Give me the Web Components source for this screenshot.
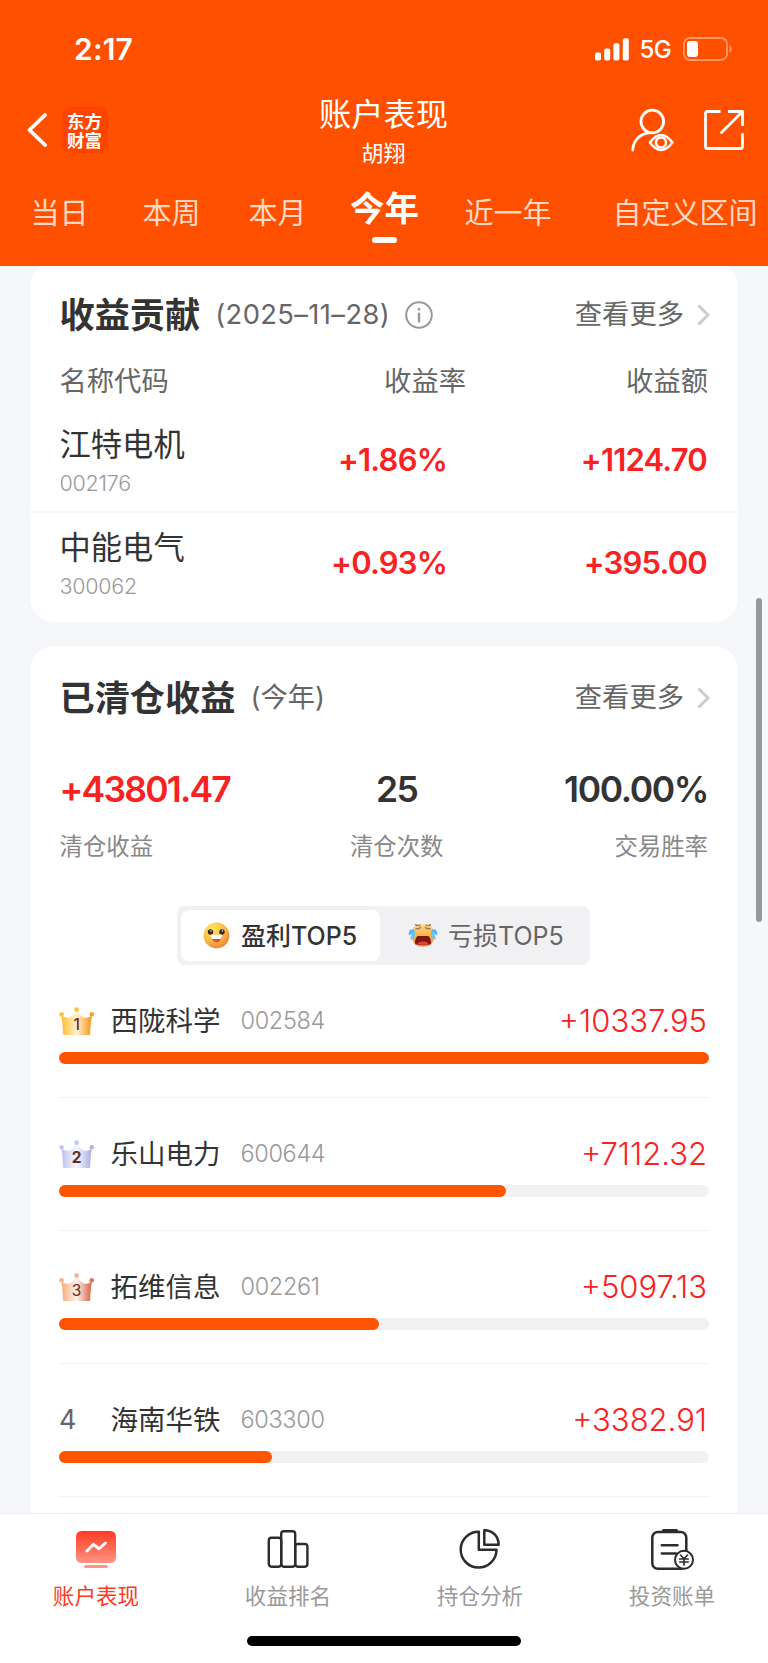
<!DOCTYPE html>
<html lang="zh-CN">
<head>
<meta charset="UTF-8">
<meta name="viewport" content="width=device-width, initial-scale=1">
<title>账户表现</title>
<style>
    html, body {
        margin: 0;
        padding: 0;
    }

    body {
        width: 768px;
        height: 1663px;
        overflow: hidden;
        background: #f6f7fa;
        color: #333;
        font-family: Inter, "Noto Sans CJK SC", sans-serif;
    }
</style>
</head>
<body>
<account-page></account-page>

<script>
class StatusBar extends HTMLElement {
    constructor() {
        super();
        this.attachShadow({mode: "open"}).innerHTML = `${statusHtml}`;
    }
}

const statusHtml = `
    <style>
        :host {
            display: flex;
            justify-content: space-between;
            align-items: center;
            height: 98px;
            padding: 0 35px 0 74px;
            box-sizing: border-box;
        }

        .time {
            font-size: 30px;
            line-height: 36px;
            font-weight: 600;
            letter-spacing: .2px;
        }

        .right {
            display: flex;
            align-items: center;
        }

        .net {
            font-size: 24px;
            line-height: 30px;
            font-weight: 500;
            margin: 2px 12px 0 10px;
            letter-spacing: -0.6px;
        }
    </style>
    <span class="time">2:17</span>
    <div class="right">
        <svg width="34" height="23" viewBox="0 0 34 23" fill="#fff">
            <rect x="0" y="14.5" width="6" height="8" rx="1.8"/>
            <rect x="9.2" y="10.5" width="6" height="12" rx="1.8"/>
            <rect x="18.4" y="5.3" width="6" height="17.2" rx="1.8"/>
            <rect x="27.8" y="0.3" width="6" height="22.2" rx="1.8"/>
        </svg>
        <span class="net">5G</span>
        <svg width="50" height="24" viewBox="0 0 50 24">
            <rect x="1" y="1" width="43" height="22" rx="6" fill="none" stroke="#fff" stroke-opacity=".4" stroke-width="1.8"/>
            <rect x="4" y="4" width="11" height="16" rx="3" fill="#fff"/>
            <path d="M46.5 8 C49.6 9.4 49.6 14.6 46.5 16 Z" fill="#fff" fill-opacity=".4"/>
        </svg>
    </div>
`;

class TitleBar extends HTMLElement {
    constructor() {
        super();
        this.attachShadow({mode: "open"}).innerHTML = `${titleHtml}`;
    }
}

const titleHtml = `
    <style>
        :host {
            display: grid;
            grid-template-columns: 1fr auto 1fr;
            height: 68px;
            padding: 0 24px 0 27px;
        }

        .left, .right {
            display: flex;
            align-items: center;
            height: 64px;
        }

        .right {
            justify-content: flex-end;
            gap: 30px;
        }

        .logo {
            box-sizing: border-box;
            width: 46px;
            height: 46px;
            margin-left: 15px;
            padding: 4px 5px 0;
            border-radius: 9px;
            background: #ff4300;
            font-family: "Noto Sans CJK SC", sans-serif;
            font-size: 17.5px;
            line-height: 19px;
            font-weight: 700;
        }

        .middle {
            text-align: center;
            margin-right: 4px;
        }

        .title {
            font-size: 32.3px;
            line-height: 34px;
        }

        .user {
            font-size: 22px;
            line-height: 26px;
            margin-top: 8px;
        }
    </style>
    <div class="left">
        <svg width="20" height="34" viewBox="0 0 20 34" fill="none" stroke="#fff" stroke-width="3.8" stroke-linecap="round" stroke-linejoin="round">
            <path d="M18 2 L2.5 17 L18 32"/>
        </svg>
        <div class="logo">东方财富</div>
    </div>
    <div class="middle">
        <div class="title"><slot name="title"></slot></div>
        <div class="user"><slot name="user"></slot></div>
    </div>
    <div class="right">
        <svg width="44" height="44" viewBox="0 0 44 44" fill="none" stroke="#fff" stroke-width="2.8" stroke-linecap="round">
            <circle cx="22.3" cy="13.5" r="11.3"/>
            <path d="M2.7 42 C3.5 31.5 11 25 21 24.6"/>
            <path d="M20 34.5 Q31 19.5 42.5 34.5 Q31 49.5 20 34.5 Z" stroke-width="2.5" stroke-linejoin="round"/>
            <circle cx="31" cy="34.5" r="5" stroke-width="2.5"/>
        </svg>
        <svg width="40" height="40" viewBox="0 0 40 40" fill="none" stroke="#fff" stroke-width="2.8" stroke-linejoin="round">
            <path d="M16.5 1.5 H3.5 Q1.5 1.5 1.5 3.5 V36.5 Q1.5 38.5 3.5 38.5 H36.5 Q38.5 38.5 38.5 36.5 V23.3"/>
            <path d="M24 1.5 H38.5 V16"/>
            <path d="M38 2 L17.5 22.5" stroke-linecap="round"/>
        </svg>
    </div>
`;

class RangeTab extends HTMLElement {
    constructor() {
        super();
        this.attachShadow({mode: "open"}).innerHTML = `${tabHtml}`;
    }
}

const tabHtml = `
    <style>
        :host {
            display: block;
            padding-top: 31px;
            font-size: 29px;
            line-height: 34px;
            color: rgba(255, 255, 255, .78);
            white-space: nowrap;
            flex: none;
        }

        :host([active]) {
            padding-top: 24px;
            font-size: 34.5px;
            line-height: 38px;
            font-weight: 700;
            color: #fff;
        }

        i {
            display: none;
            width: 25px;
            height: 6px;
            margin: 9px auto 0;
            border-radius: 3px;
            background: #fff;
        }

        :host([active]) i {
            display: block;
        }
    </style>
    <slot></slot>
    <i></i>
`;

class InfoCard extends HTMLElement {
    constructor() {
        super();
        this.attachShadow({mode: "open"}).innerHTML = `${cardHtml}`;
        if (!this.hasAttribute("info")) {
            this.shadowRoot.querySelector(".info").remove();
        }
    }
}

const cardHtml = `
    <style>
        :host {
            display: block;
            margin: 0 30px;
            border-radius: 24px;
            background: #fff;
        }

        .head {
            display: flex;
            align-items: center;
            box-sizing: border-box;
            height: 104px;
            padding: 0 28px 0 29.5px;
            color: #666;
            font-size: 27.3px;
            line-height: 36px;
        }

        :host([info]) .head {
            padding-top: 2px;
        }

        :host([info]) slot[name=note] {
            letter-spacing: .4px;
        }

        .title {
            font-size: 35.2px;
            line-height: 40px;
            font-weight: 700;
            color: #333;
            margin-right: 15px;
        }

        .info {
            margin-left: 15px;
        }

        .more {
            margin-left: auto;
            margin-right: 13px;
        }
    </style>
    <div class="head">
        <span class="title"><slot name="title"></slot></span>
        <slot name="note"></slot>
        <svg class="info" width="28" height="28" viewBox="0 0 28 28" fill="none" stroke="#999" stroke-width="2">
            <circle cx="14" cy="14" r="12.8"/>
            <path d="M14 11.7 V21.5 M14 7 V9.6" stroke-width="2.4"/>
        </svg>
        <span class="more">查看更多</span>
        <svg width="13" height="22" viewBox="0 0 13 22" fill="none" stroke="#ccc" stroke-width="3">
            <path d="M1.5 1.5 L11 11 L1.5 20.5"/>
        </svg>
    </div>
    <slot></slot>
`;

class StockHead extends HTMLElement {
    constructor() {
        super();
        this.attachShadow({mode: "open"}).innerHTML = `${stockHeadHtml}`;
    }
}

const stockHeadHtml = `
    <style>
        :host {
            display: grid;
            grid-template-columns: 200px 1fr 242px;
            padding: 1px 30px 0 29.5px;
            height: 42px;
            font-size: 27.3px;
            line-height: 30px;
            color: #666;
            text-align: right;
        }

        .name {
            text-align: left;
        }
    </style>
    <span class="name">名称代码</span><span>收益率</span><span>收益额</span>
`;

class StockRow extends HTMLElement {
    constructor() {
        super();
        this.attachShadow({mode: "open"}).innerHTML = `${stockRowHtml}`;
    }
}

const stockRowHtml = `
    <style>
        :host {
            display: grid;
            grid-template-columns: 200px 1fr 260px;
            align-items: center;
            height: 101.5px;
            padding: 0 31px 0 29.5px;
            text-align: right;
        }

        :host([line]) {
            border-bottom: 2px solid #f6f7f9;
        }

        .stock {
            text-align: left;
            padding-top: 3px;
        }

        .name {
            font-size: 31.3px;
            line-height: 36px;
        }

        .code {
            font-size: 21.5px;
            line-height: 26px;
            margin-top: 7px;
            color: #999;
            letter-spacing: -0.25px;
            font-weight: 300;
        }

        .num {
            font-size: 31px;
            line-height: 36px;
            font-weight: 600;
            color: #f82222;
            letter-spacing: -0.8px;
        }
    </style>
    <div class="stock">
        <div class="name"><slot name="name"></slot></div>
        <div class="code"><slot name="code"></slot></div>
    </div>
    <div class="num"><slot name="rate"></slot></div>
    <div class="num"><slot name="sum"></slot></div>
`;

class StatCell extends HTMLElement {
    constructor() {
        super();
        this.attachShadow({mode: "open"}).innerHTML = `${statHtml}`;
    }
}

const statHtml = `
    <style>
        :host {
            display: block;
        }

        .value {
            font-size: 35.5px;
            line-height: 40px;
            font-weight: 600;
            letter-spacing: -1.4px;
        }

        :host([up]) .value {
            color: #f82222;
            letter-spacing: -1.8px;
        }

        .label {
            font-size: 23.4px;
            line-height: 30px;
            margin-top: 22px;
            color: #888;
        }
    </style>
    <div class="value"><slot></slot></div>
    <div class="label"><slot name="label"></slot></div>
`;

class TopSwitch extends HTMLElement {
    constructor() {
        super();
        this.attachShadow({mode: "open"}).innerHTML = `${switchHtml}`;
    }
}

const switchHtml = `
    <style>
        :host {
            display: flex;
            box-sizing: border-box;
            width: 413px;
            height: 59px;
            margin: 44px 0 0 147px;
            padding: 4px;
            border-radius: 8px;
            background: #f1f1f4;
            font-size: 25px;
            line-height: 30px;
        }

        div {
            display: flex;
            align-items: center;
            box-sizing: border-box;
            width: 199px;
            padding-left: 22px;
            border-radius: 8px;
        }

        svg {
            margin-right: 11px;
        }

        .on {
            background: #fff;
            font-weight: 500;
        }

        .off {
            color: #666;
            padding-left: 28px;
        }

        .off svg {
            margin-right: 10px;
        }
    </style>
    <div class="on">
        <svg width="27" height="27" viewBox="0 0 27 27">
            <defs>
                <radialGradient id="g" cx=".35" cy=".25" r=".85">
                    <stop offset="0" stop-color="#ffe95c"/>
                    <stop offset=".55" stop-color="#fbbb45"/>
                    <stop offset="1" stop-color="#ec7434"/>
                </radialGradient>
            </defs>
            <circle cx="13.5" cy="13.5" r="12.9" fill="url(#g)"/>
            <circle cx="7.5" cy="10" r="2.7" fill="#42242c"/>
            <circle cx="19" cy="10" r="2.7" fill="#42242c"/>
            <circle cx="8" cy="9" r=".7" fill="#fff"/>
            <circle cx="19.5" cy="9" r=".7" fill="#fff"/>
            <path d="M8 13 H18.8 C18.3 22.5 9 22.7 8 13 Z" fill="#e34b2b"/>
            <path d="M7.6 12.7 H19.2 Q18.8 15.8 17.7 17 H9.2 Q8 15.6 7.6 12.7 Z" fill="#fff"/>
        </svg>
        <span>盈利TOP5</span>
    </div>
    <div class="off">
        <svg width="30" height="25" viewBox="0 0 30 25">
            <defs>
                <linearGradient id="c" x1="0" y1="0" x2="0" y2="1">
                    <stop offset="0" stop-color="#ffd98a"/>
                    <stop offset=".5" stop-color="#f9b445"/>
                    <stop offset="1" stop-color="#e98a35"/>
                </linearGradient>
            </defs>
            <path d="M6 3.5 Q15 -1 24 3.5 Q26.5 10 25.5 17 Q23.5 23.8 15 23.8 Q6.5 23.8 4.5 17 Q3.5 10 6 3.5 Z" fill="url(#c)"/>
            <path d="M7.5 1 Q8 3.6 12.5 1.8 M22.5 1 Q22 3.6 17.5 1.8 M7.5 5.6 Q11.5 6.4 13 3.8 M22.5 5.6 Q18.5 6.4 17 3.8" fill="none" stroke="#977a70" stroke-width="1.4"/>
            <path d="M9.5 13 H20.5 Q23.6 16.5 22.8 21.3 Q15 22.9 7.2 21.3 Q6.4 16.5 9.5 13 Z" fill="#811713"/>
            <path d="M9.5 21.2 Q10.5 18 15 18.7 Q19.5 18 20.5 21.2 Q15 22.4 9.5 21.2 Z" fill="#e0433d"/>
            <path d="M7 7.2 C2 4.2 .3 8.5 .8 12.2 Q3.5 12 7 7.2 Z M23 7.2 C28 4.2 29.7 8.5 29.2 12.2 Q26.5 12 23 7.2 Z" fill="#58b5f2"/>
            <path d="M7 7.5 C3.5 10.5 1.8 14 2.7 16.8 Q8 15.8 7 7.5 Z M23 7.5 C26.5 10.5 28.2 14 27.3 16.8 Q22 15.8 23 7.5 Z" fill="#6dc2f5"/>
        </svg>
        <span>亏损TOP5</span>
    </div>
`;

// gradient stops and number weight of the three crowns
const crowns = {
    1: ["#ffc33d", "#fff3d4", "#f9a12b", 500],
    2: ["#c3c9ee", "#f7f8ff", "#b4b7e6", 700],
    3: ["#f5b48c", "#fff1e9", "#de7558", 400]
};

class RankItem extends HTMLElement {
    constructor() {
        super();
        const rank = this.getAttribute("rank");
        this.attachShadow({mode: "open"}).innerHTML = `
            <style>${rankCss}</style>
            <div class="line">
                <div class="rank">${crowns[rank] ? crownHtml(rank, crowns[rank]) : rank}</div>
                <div class="name"><slot name="name"></slot></div>
                <div class="code"><slot name="code"></slot></div>
                <div class="sum"><slot name="sum"></slot></div>
            </div>
            <div class="bar"><div class="fill"></div></div>
        `;
        this.shadowRoot.querySelector(".fill").style.width = this.getAttribute("part") + "%";
    }
}

const crownHtml = (rank, [from, mid, to, weight]) => `
    <svg width="36" height="28" viewBox="0 0 36 28">
        <defs>
            <linearGradient id="k">
                <stop offset=".08" stop-color="${from}"/>
                <stop offset=".5" stop-color="${mid}"/>
                <stop offset=".92" stop-color="${to}"/>
            </linearGradient>
        </defs>
        <path d="M2 8.2 Q7.5 12 11 10.3 Q14.5 8.5 17.6 4 Q21 8.5 24.5 10.3 Q28 12 33.2 8.2 Q31.6 14 31.2 27 Q31.1 28 30.2 28 H5 Q4.1 28 4 27 Q3.6 14 2 8.2 Z" fill="url(#k)"/>
        <circle cx="2.6" cy="7.2" r="2.3" fill="${from}"/>
        <circle cx="17.6" cy="2.7" r="2.4" fill="${from}"/>
        <circle cx="32.8" cy="7.2" r="2.3" fill="${to}"/>
        <text x="17.6" y="23.3" text-anchor="middle" font-size="15.5" font-weight="${weight}" fill="#662c20">${rank}</text>
    </svg>
`;

const rankCss = `
    :host {
        display: block;
        box-sizing: border-box;
        height: 133px;
        margin: 0 29px;
        padding-top: 36px;
        border-bottom: 1.5px solid #f2f3f5;
    }

    .line {
        display: flex;
        align-items: center;
        height: 40px;
        line-height: 36px;
    }

    .rank {
        width: 51.5px;
        font-size: 27px;
        color: #666;
    }

    svg {
        display: block;
    }

    .name {
        font-size: 27.5px;
        margin-right: 20px;
    }

    .code {
        font-size: 23.5px;
        color: #999;
        letter-spacing: -0.35px;
        font-weight: 300;
    }

    .sum {
        margin-left: auto;
        margin-right: 2px;
        font-size: 31px;
        font-weight: 350;
        color: #f82222;
        letter-spacing: 0;
    }

    .bar {
        height: 12px;
        margin-top: 11px;
        border-radius: 6px;
        background: #f1f1f4;
    }

    .fill {
        height: 12px;
        border-radius: 6px;
        background: #ff5500;
    }
`;

class NavItem extends HTMLElement {
    constructor() {
        super();
        this.attachShadow({mode: "open"}).innerHTML = `
            <style>${navItemCss}</style>
            ${navIcons[this.getAttribute("icon")]}
            <span><slot></slot></span>
        `;
    }
}

const navItemCss = `
    :host {
        display: flex;
        flex: 1;
        flex-direction: column;
        align-items: center;
        color: #999;
        font-size: 21.6px;
        line-height: 26px;
    }

    :host([active]) {
        color: #ff3a22;
    }

    svg {
        margin: 13px 0 12px;
    }
`;

const navIcons = {
    account: `
        <svg width="44" height="44" viewBox="0 0 44 44">
            <defs>
                <linearGradient id="a" x1="0" y1="0" x2="0" y2="1">
                    <stop offset="0" stop-color="#ff3b22"/>
                    <stop offset="1" stop-color="#ff9486"/>
                </linearGradient>
            </defs>
            <rect x="2" y="4" width="40" height="32" rx="5.5" fill="url(#a)"/>
            <rect x="10" y="38" width="24" height="3" rx="1.5" fill="#ff9486"/>
            <path d="M13 24 L19.5 17.3 L25 21.8 L31.5 16" fill="none" stroke="#fff" stroke-width="2.8" stroke-linecap="round" stroke-linejoin="round"/>
        </svg>`,
    rank: `
        <svg width="44" height="44" viewBox="0 0 44 44" fill="none" stroke="#2c2c2c" stroke-width="2.4">
            <rect x="2.8" y="10.7" width="12.4" height="29" rx="2.6"/>
            <rect x="15.2" y="4.3" width="14" height="35.4" rx="2.6"/>
            <rect x="29.2" y="17" width="12.2" height="22.7" rx="2.6"/>
        </svg>`,
    pie: `
        <svg width="44" height="44" viewBox="0 0 44 44" fill="none" stroke="#2c2c2c" stroke-width="2.5" stroke-linejoin="round">
            <path d="M20.8 4.8 A17.9 17.9 0 1 0 38.5 22.8 H20.8 Z"/>
            <path d="M26.3 3.2 V17.8 H40.6 C40.6 9.5 35 3.2 26.3 3.2 Z"/>
        </svg>`,
    bill: `
        <svg width="44" height="44" viewBox="0 0 44 44" fill="none" stroke="#2c2c2c" stroke-width="2.5" stroke-linecap="round">
            <rect x="2.3" y="5" width="34" height="36.7" rx="5.5"/>
            <path d="M13.5 3.6 H26.5" stroke-width="3.2"/>
            <path d="M11.8 18.2 H27.5 M11.8 26.4 H26"/>
            <circle cx="34" cy="32.8" r="9" fill="#fff" stroke-width="2"/>
            <path d="M30.5 28 L34 31.8 L37.5 28 M34 31.8 V38 M29.7 32 H38.3 M29.7 35 H38.3" stroke-width="1.6"/>
        </svg>`
};

class AccountPage extends HTMLElement {
    constructor() {
        super();
        this.attachShadow({mode: "open"}).innerHTML = `${pageHtml}`;
    }
}

const pageCss = `
    :host {
        display: flex;
        flex-direction: column;
        position: relative;
        height: 1663px;
        overflow: hidden;
    }

    header {
        flex: none;
        height: 266px;
        background: #ff5000;
        color: #fff;
    }

    .tabs {
        display: flex;
        height: 100px;
        margin-left: 30.5px;
        overflow: hidden;
    }

    main {
        flex: 1;
        min-height: 0;
        overflow: hidden;
    }

    .first {
        height: 360px;
        margin-top: -4px;
    }

    .second {
        height: 900px;
        margin-top: 24px;
    }

    .stats {
        display: grid;
        grid-template-columns: 1fr 1fr 1fr;
        padding: 20px 30px 0 29.5px;
    }

    .stats :nth-child(2) {
        text-align: center;
        margin-left: 26px;
    }

    .stats :nth-child(3) {
        text-align: right;
    }

    nav {
        display: flex;
        flex: none;
        height: 122px;
        border-top: 1.5px solid #eeeff0;
        background: #fff;
    }

    .home {
        flex: none;
        height: 27px;
        background: #fff;
    }

    .home i {
        display: block;
        width: 274px;
        height: 10px;
        margin: 0 auto;
        border-radius: 5px;
        background: #000;
    }

    .scroll {
        position: absolute;
        top: 598px;
        right: 6px;
        width: 6px;
        height: 324px;
        border-radius: 3px;
        background: #98999b;
    }
`;

const pageHtml = `
    <style>${pageCss}</style>
    <header>
        <status-bar></status-bar>
        <title-bar>
            <span slot="title">账户表现</span>
            <span slot="user">胡翔</span>
        </title-bar>
        <div class="tabs">
            <range-tab>当日</range-tab>
            <range-tab style="margin-left: 54px">本周</range-tab>
            <range-tab style="margin-left: 48px">本月</range-tab>
            <range-tab style="margin-left: 43.5px" active>今年</range-tab>
            <range-tab style="margin-left: 45.5px">近一年</range-tab>
            <range-tab style="margin-left: 61px">自定义区间</range-tab>
        </div>
    </header>
    <main>
        <info-card class="first" info>
            <span slot="title">收益贡献</span>
            <span slot="note">(2025–11–28)</span>
            <stock-head></stock-head>
            <stock-row line>
                <span slot="name">江特电机</span><span slot="code">002176</span>
                <span slot="rate">+1.86%</span><span slot="sum">+1124.70</span>
            </stock-row>
            <stock-row>
                <span slot="name">中能电气</span><span slot="code">300062</span>
                <span slot="rate">+0.93%</span><span slot="sum">+395.00</span>
            </stock-row>
        </info-card>
        <info-card class="second">
            <span slot="title">已清仓收益</span>
            <span slot="note">(今年)</span>
            <div class="stats">
                <stat-cell up>+43801.47<span slot="label">清仓收益</span></stat-cell>
                <stat-cell>25<span slot="label">清仓次数</span></stat-cell>
                <stat-cell>100.00%<span slot="label">交易胜率</span></stat-cell>
            </div>
            <top-switch></top-switch>
            <div class="ranks">
                <rank-item rank="1" part="100">
                    <span slot="name">西陇科学</span><span slot="code">002584</span><span slot="sum">+10337.95</span>
                </rank-item>
                <rank-item rank="2" part="68.8">
                    <span slot="name">乐山电力</span><span slot="code">600644</span><span slot="sum">+7112.32</span>
                </rank-item>
                <rank-item rank="3" part="49.3">
                    <span slot="name">拓维信息</span><span slot="code">002261</span><span slot="sum">+5097.13</span>
                </rank-item>
                <rank-item rank="4" part="32.7">
                    <span slot="name">海南华铁</span><span slot="code">603300</span><span slot="sum">+3382.91</span>
                </rank-item>
            </div>
        </info-card>
    </main>
    <nav>
        <nav-item icon="account" active>账户表现</nav-item>
        <nav-item icon="rank">收益排名</nav-item>
        <nav-item icon="pie">持仓分析</nav-item>
        <nav-item icon="bill">投资账单</nav-item>
    </nav>
    <div class="home"><i></i></div>
    <div class="scroll"></div>
`;

customElements.define("status-bar", StatusBar);
customElements.define("title-bar", TitleBar);
customElements.define("range-tab", RangeTab);
customElements.define("info-card", InfoCard);
customElements.define("stock-head", StockHead);
customElements.define("stock-row", StockRow);
customElements.define("stat-cell", StatCell);
customElements.define("top-switch", TopSwitch);
customElements.define("rank-item", RankItem);
customElements.define("nav-item", NavItem);
customElements.define("account-page", AccountPage);
</script>
</body>
</html>
